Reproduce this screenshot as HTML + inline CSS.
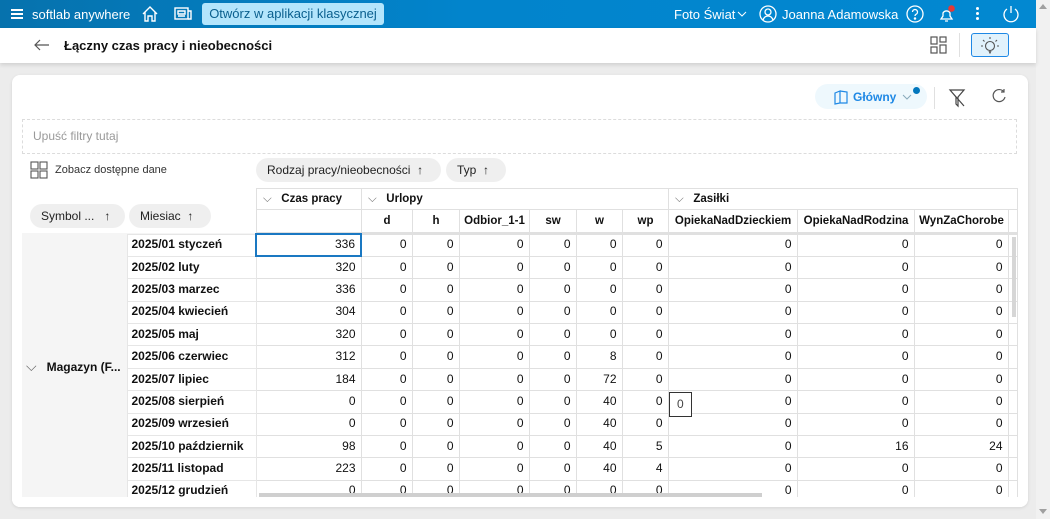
<!DOCTYPE html>
<html><head><meta charset="utf-8"><style>
*{box-sizing:border-box;margin:0;padding:0}
body{width:1050px;height:519px;overflow:hidden;background:#ececec;font-family:"Liberation Sans",sans-serif;font-size:12px;color:#111;position:relative}
.top{position:absolute;left:0;top:0;width:1036px;height:28px;background:linear-gradient(90deg,#0672ad 0,#0284cc 45%,#0288d1 100%);color:#fff}
.sb{position:absolute;left:1036px;top:0;width:14px;height:519px;background:#f1f1f1}
.sub{position:absolute;left:0;top:28px;width:1036px;height:35px;background:#fff;box-shadow:0 2px 4px rgba(0,0,0,.12)}
.card{position:absolute;left:12px;top:75px;width:1016px;height:432px;background:#fff;border-radius:8px;box-shadow:0 1px 3px rgba(0,0,0,.1)}
.a{position:absolute;white-space:nowrap}
.chip{position:absolute;height:24px;border-radius:12px;background:#efefef;line-height:24px;font-size:12px;color:#222;padding-left:11px}
table{border-collapse:collapse;table-layout:fixed;position:absolute}
td{border:1px solid #e0e0e0;height:22.4px;padding:0 5px 2px 4px;text-align:right;font-size:12px;white-space:nowrap;overflow:hidden}
td.m{text-align:left;background:#fff;border-color:#e6e6e6;font-weight:bold}
.hd td{font-weight:bold;text-align:center;height:auto;font-size:11.5px;padding:0 3px}
</style></head><body>
<div class="top">
 <div class="a" style="left:11px;top:9px;width:12px;height:2px;background:#fff;box-shadow:0 4px 0 #fff,0 8px 0 #fff"></div>
 <div class="a" style="left:32px;top:7px;font-size:13px">softlab anywhere</div>
 <svg class="a" style="left:141px;top:5px" width="18" height="18" viewBox="0 0 18 18" fill="none" stroke="#fff" stroke-width="1.4"><path d="M2 9 9 2l7 7M4 7v9h3v-5h4v5h3V7"/></svg>
 <svg class="a" style="left:174px;top:7px" width="18" height="14" viewBox="0 0 18 14" fill="none" stroke="#fff" stroke-width="1.4"><rect x="1" y="1" width="13" height="11"/><path d="M14 4h3v8h-3M4 4h7v3H4zM4 9h7"/></svg>
 <div class="a" style="left:202px;top:3px;width:182px;height:22px;background:#b3e5fc;border-radius:3px;color:#0a5f8e;font-size:13px;line-height:22px;text-align:center">Otwórz w aplikacji klasycznej</div>
 <div class="a" style="left:674px;top:7px;font-size:13px">Foto Świat</div>
 <svg class="a" style="left:737px;top:11px" width="10" height="6"><path d="M1 1l4 4 4-4" stroke="#fff" fill="none"/></svg>
 <svg class="a" style="left:759px;top:5px" width="18" height="18" viewBox="0 0 18 18" fill="none" stroke="#fff" stroke-width="1.3"><circle cx="9" cy="9" r="8"/><circle cx="9" cy="7" r="3"/><path d="M4 15c1-3 3-4 5-4s4 1 5 4"/></svg>
 <div class="a" style="left:782px;top:7px;font-size:13px">Joanna Adamowska</div>
 <svg class="a" style="left:906px;top:5px" width="18" height="18" viewBox="0 0 18 18" fill="none" stroke="#fff" stroke-width="1.3"><circle cx="9" cy="9" r="8"/><path d="M6.5 7a2.5 2.5 0 1 1 3.5 2.3c-.8.4-1 .9-1 1.7"/><circle cx="9" cy="13.5" r=".6" fill="#fff"/></svg>
 <svg class="a" style="left:937px;top:4px" width="20" height="20" viewBox="0 0 20 20" fill="none" stroke="#fff" stroke-width="1.3"><path d="M4 15h11l-2-3V9a4 4 0 0 0-7 0v3zM8 17h3"/><circle cx="14.5" cy="4.5" r="3.3" fill="#e53935" stroke="none"/></svg>
 <div class="a" style="left:976px;top:7px;width:3px;height:3px;background:#fff;border-radius:2px;box-shadow:0 5px 0 #fff,0 10px 0 #fff"></div>
 <svg class="a" style="left:1002px;top:5px" width="18" height="18" viewBox="0 0 18 18" fill="none" stroke="#fff" stroke-width="1.3"><path d="M5 4a7 7 0 1 0 8 0M9 1v7"/></svg>
</div>
<div class="sb"><div class="a" style="left:3px;top:4px;border:4px solid transparent;border-bottom:5px solid #a0a0a0;border-top:0"></div><div class="a" style="left:3px;top:509px;border:4px solid transparent;border-top:5px solid #a0a0a0;border-bottom:0"></div></div>
<div class="sub">
 <svg class="a" style="left:33px;top:10px" width="17" height="14"><path d="M16 7H2M7 2 2 7l5 5" stroke="#555" fill="none" stroke-width="1.2"/></svg>
 <div class="a" style="left:64px;top:10px;font-size:13px;font-weight:bold">Łączny czas pracy i nieobecności</div>
 <svg class="a" style="left:930px;top:8px" width="18" height="18" fill="none" stroke="#555" stroke-width="1.2"><rect x="1" y="1" width="6" height="7"/><rect x="10" y="1" width="6" height="5"/><rect x="1" y="11" width="6" height="6"/><rect x="10" y="9" width="6" height="8"/></svg>
 <div class="a" style="left:959px;top:5px;width:1px;height:24px;background:#e0e0e0"></div>
 <div class="a" style="left:971px;top:5px;width:38px;height:24px;border:1px solid #1e88e5;border-radius:3px;background:#e1f2fc"></div>
 <svg class="a" style="left:980px;top:8px" width="20" height="18" fill="none" stroke="#555" stroke-width="1.1"><circle cx="10" cy="10" r="4.5"/><path d="M10 1v2M3 4l1.5 1.5M17 4l-1.5 1.5M1 10h2M17 10h2M9 15l1 2 1-2"/></svg>
</div>
<div class="card">
 <div class="a" style="left:803px;top:9px;width:112px;height:25px;border-radius:13px;background:#eef8fd"></div>
 <svg class="a" style="left:821px;top:14px" width="16" height="16" fill="none" stroke="#1e88e5" stroke-width="1.2"><path d="M2 4l5-2v12l-5 1zM7 2l7 1v11l-7 0"/></svg>
 <div class="a" style="left:841px;top:15px;font-size:12px;font-weight:bold;color:#1e88e5">Główny</div>
 <svg class="a" style="left:890px;top:19px" width="10" height="6"><path d="M1 1l4 4 4-4" stroke="#8ab" fill="none"/></svg>
 <div class="a" style="left:901px;top:12px;width:7px;height:7px;border-radius:4px;background:#0277bd"></div>
 <div class="a" style="left:922px;top:12px;width:1px;height:22px;background:#e0e0e0"></div>
 <svg class="a" style="left:936px;top:13px" width="18" height="20" fill="none" stroke="#444" stroke-width="1.2"><path d="M2 2h14l-6 7v9l-2-2V9zM2 2l14 16"/></svg>
 <svg class="a" style="left:979px;top:13px" width="16" height="16" fill="none" stroke="#555" stroke-width="1.2"><path d="M13 4a6 6 0 1 0 1 5M13 1v3h-3"/></svg>
 <div class="a" style="left:10px;top:44px;width:995px;height:35px;border:1px dashed #dcdcdc"></div>
 <div class="a" style="left:21px;top:54px;color:#999;font-size:12px">Upuść filtry tutaj</div>
 <svg class="a" style="left:18px;top:86px" width="18" height="18" fill="none" stroke="#555" stroke-width="1.1"><rect x="1" y="1" width="7" height="7"/><rect x="10" y="1" width="7" height="7"/><rect x="1" y="10" width="7" height="7"/><rect x="10" y="10" width="7" height="7"/></svg>
 <div class="a" style="left:43px;top:89px;font-size:11px;color:#333">Zobacz dostępne dane</div>
 <div class="chip" style="left:244px;top:83px;width:185px">Rodzaj pracy/nieobecności&nbsp;&nbsp;↑</div>
 <div class="chip" style="left:434px;top:83px;width:60px">Typ&nbsp;&nbsp;↑</div>
 <div class="chip" style="left:18px;top:129px;width:95px">Symbol ...&nbsp;&nbsp;&nbsp;↑</div>
 <div class="chip" style="left:117px;top:129px;width:82px">Miesiac&nbsp;&nbsp;↑</div>
 <div class="a" style="left:10px;top:158px;width:234px;height:264px;background:#f5f5f5"></div>
</div>
<table class="hd" style="left:256px;top:188px;width:761px">
<colgroup><col style="width:105px"><col style="width:51px"><col style="width:47px"><col style="width:70px"><col style="width:47px"><col style="width:46px"><col style="width:46px"><col style="width:129px"><col style="width:117px"><col style="width:94px"><col style="width:9px"></colgroup>
<tr style="height:21px"><td style="text-align:left;padding-left:6px"><span style="color:#777;font-weight:normal">⌵</span>&nbsp;&nbsp;&nbsp;Czas pracy</td><td colspan="6" style="text-align:left;padding-left:6px"><span style="color:#777;font-weight:normal">⌵</span>&nbsp;&nbsp;&nbsp;Urlopy</td><td colspan="4" style="text-align:left;padding-left:6px"><span style="color:#777;font-weight:normal">⌵</span>&nbsp;&nbsp;&nbsp;Zasiłki</td></tr>
<tr style="height:24px;border-bottom:3px solid #e0e0e0"><td></td><td>d</td><td>h</td><td>Odbior_1-1</td><td>sw</td><td>w</td><td>wp</td><td>OpiekaNadDzieckiem</td><td>OpiekaNadRodzina</td><td>WynZaChorobe</td><td></td></tr>
</table>
<table style="left:22px;top:233px;width:995px">
<colgroup><col style="width:105px"><col style="width:129px"><col style="width:105px"><col style="width:51px"><col style="width:47px"><col style="width:70px"><col style="width:47px"><col style="width:46px"><col style="width:46px"><col style="width:129px"><col style="width:117px"><col style="width:94px"><col style="width:9px"></colgroup>
<tr><td rowspan="12" style="text-align:left;font-weight:bold;background:#f5f5f5;border:0;padding-left:4px;padding-bottom:0;vertical-align:top;padding-top:124px"><span style="color:#666;font-weight:normal;font-size:14px">⌵</span>&nbsp;&nbsp;&nbsp;Magazyn (F...</td><td class="m">2025/01 styczeń</td><td style="border:2px solid #1a78c2">336</td><td>0</td><td>0</td><td>0</td><td>0</td><td>0</td><td>0</td><td>0</td><td>0</td><td>0</td><td></td></tr>
<tr><td class="m">2025/02 luty</td><td>320</td><td>0</td><td>0</td><td>0</td><td>0</td><td>0</td><td>0</td><td>0</td><td>0</td><td>0</td><td></td></tr>
<tr><td class="m">2025/03 marzec</td><td>336</td><td>0</td><td>0</td><td>0</td><td>0</td><td>0</td><td>0</td><td>0</td><td>0</td><td>0</td><td></td></tr>
<tr><td class="m">2025/04 kwiecień</td><td>304</td><td>0</td><td>0</td><td>0</td><td>0</td><td>0</td><td>0</td><td>0</td><td>0</td><td>0</td><td></td></tr>
<tr><td class="m">2025/05 maj</td><td>320</td><td>0</td><td>0</td><td>0</td><td>0</td><td>0</td><td>0</td><td>0</td><td>0</td><td>0</td><td></td></tr>
<tr><td class="m">2025/06 czerwiec</td><td>312</td><td>0</td><td>0</td><td>0</td><td>0</td><td>8</td><td>0</td><td>0</td><td>0</td><td>0</td><td></td></tr>
<tr><td class="m">2025/07 lipiec</td><td>184</td><td>0</td><td>0</td><td>0</td><td>0</td><td>72</td><td>0</td><td>0</td><td>0</td><td>0</td><td></td></tr>
<tr><td class="m">2025/08 sierpień</td><td>0</td><td>0</td><td>0</td><td>0</td><td>0</td><td>40</td><td>0</td><td>0</td><td>0</td><td>0</td><td></td></tr>
<tr><td class="m">2025/09 wrzesień</td><td>0</td><td>0</td><td>0</td><td>0</td><td>0</td><td>40</td><td>0</td><td>0</td><td>0</td><td>0</td><td></td></tr>
<tr><td class="m">2025/10 październik</td><td>98</td><td>0</td><td>0</td><td>0</td><td>0</td><td>40</td><td>5</td><td>0</td><td>16</td><td>24</td><td></td></tr>
<tr><td class="m">2025/11 listopad</td><td>223</td><td>0</td><td>0</td><td>0</td><td>0</td><td>40</td><td>4</td><td>0</td><td>0</td><td>0</td><td></td></tr>
<tr><td class="m">2025/12 grudzień</td><td>0</td><td>0</td><td>0</td><td>0</td><td>0</td><td>0</td><td>0</td><td>0</td><td>0</td><td>0</td><td></td></tr>
</table>
<div class="a" style="left:12px;top:497px;width:1016px;height:10px;background:#fff;border-radius:0 0 8px 8px"></div>
<div class="a" style="left:259px;top:493px;width:503px;height:4px;background:#cfcfcf"></div>
<div class="a" style="left:1012px;top:237px;width:4px;height:80px;background:#d6d6d6"></div>
<div class="a" style="left:669px;top:392px;width:23px;height:25px;border:1px solid #333;background:#fff;font-size:12px;line-height:23px;padding-left:7px;color:#444">0</div>
</body></html>
